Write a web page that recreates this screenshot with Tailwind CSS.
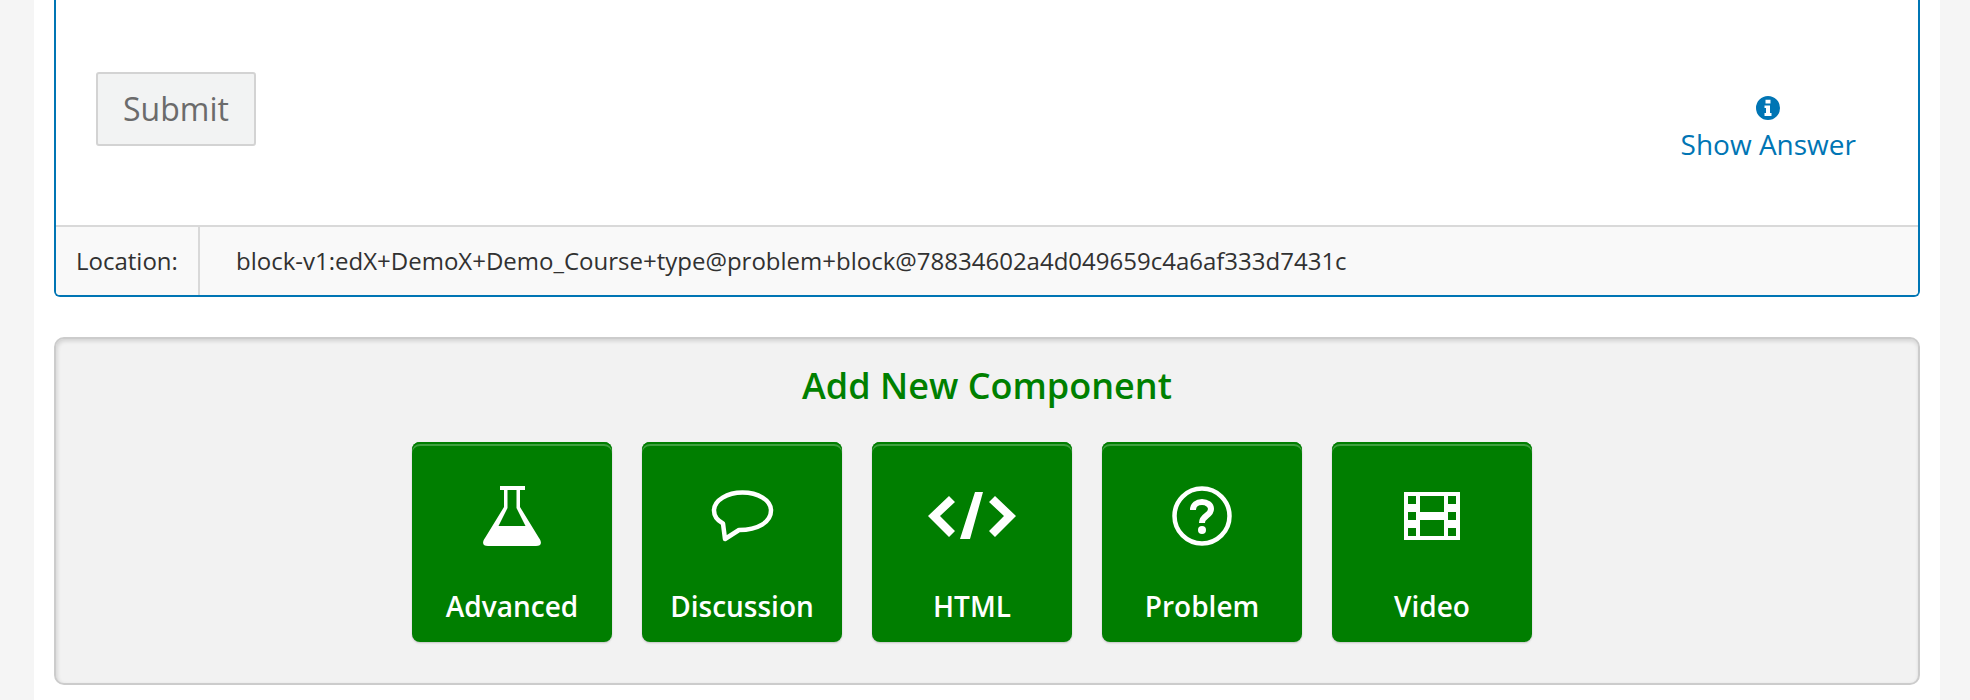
<!DOCTYPE html>
<html lang="en">
<head>
<meta charset="utf-8">
<script src="https://cdn.jsdelivr.net/npm/@tailwindcss/browser@4"></script>
<title>Unit</title>
</head>
<body class="bg-[#f5f5f5] overflow-hidden font-['Open_Sans',sans-serif]">
<main class="ml-[34px] mr-[30px] h-[700px] bg-white px-[20px]">
  <section class="h-[297px] rounded-b-[6px] border-2 border-t-0 border-[#0075b4] flex flex-col overflow-hidden">
    <div class="h-[225px] flex justify-between pl-[40px] pr-[62px]">
      <button class="mt-[72px] h-[74px] w-[160px] rounded-[3px] border-2 border-[#d3d3d3] bg-[#f2f3f3] text-[32px] leading-none text-[#6b6b6b]">Submit</button>
      <a class="mt-[96px] flex flex-col items-center text-[#0075b4] text-[28px] leading-[38px]">
        <svg class="w-[24px] h-[24px]" viewBox="0 0 24 24"><path fill="#0075b4" fill-rule="evenodd" d="M12 0a12 12 0 1 1 0 24a12 12 0 0 1 0-24ZM9.500 3.800v3.600h5V3.800ZM8.500 9.500v2.600h1.500v5H8.500v3h7v-3h-1.500V9.500Z"/></svg>
        <span class="mt-[5px]">Show Answer</span>
      </a>
    </div>
    <div class="flex-1 flex border-t-2 border-[#d9d9d9] bg-[#f9f9f9] text-[24px] text-[#313131]">
      <div class="w-[144px] border-r-2 border-[#d9d9d9] flex items-center pl-[20px]">Location:</div>
      <div class="flex items-center pl-[36px]">block-v1:edX+DemoX+Demo_Course+type@problem+block@78834602a4d049659c4a6af333d7431c</div>
    </div>
  </section>
  <section class="mt-[40px] h-[348px] rounded-[10px] border-2 border-[#cccccc] bg-[#f2f2f2] shadow-[inset_1px_2px_4px_rgba(0,0,0,0.14)] pt-[22px] text-center">
    <h2 class="h-[50px] text-[36px] leading-[50px] font-semibold text-[#008000]">Add New Component</h2>
    <div class="mt-[31px] flex justify-center">
      <button class="mr-[30px] h-[200px] w-[200px] rounded-[8px] bg-[#007e00] shadow-[inset_0_2px_0_#007e00,inset_0_4px_0_#3f9f3f,0_1px_2px_rgba(0,0,0,0.2)] flex flex-col items-center pt-[44px] text-white">
        <svg class="w-[88px] h-[60px]" viewBox="0 0 88 60"><path fill="#fff" fill-rule="evenodd" d="M32 0H57V4H52V21L71 52C74.500 57 73 60 68 60H20C15 60 13.500 57 17 52L36 21V4H32ZM39.500 4V22L30.500 40H57.500L48.500 22V4Z"/></svg>
        <span class="mt-[40px] text-[28px] leading-[40px] font-semibold">Advanced</span>
      </button>
      <button class="mr-[30px] h-[200px] w-[200px] rounded-[8px] bg-[#007e00] shadow-[inset_0_2px_0_#007e00,inset_0_4px_0_#3f9f3f,0_1px_2px_rgba(0,0,0,0.2)] flex flex-col items-center pt-[44px] text-white">
        <svg class="w-[88px] h-[60px]" viewBox="0 0 88 60"><path fill="none" stroke="#fff" stroke-width="4.500" stroke-linejoin="round" d="M44.500 6.500C29.500 6.500 16 14 16 24.500c0 5.500 3.500 10 9 13L27 53 41 44C60 44 73 36 73 24.500 73 14 60 6.500 44.500 6.500Z"/></svg>
        <span class="mt-[40px] text-[28px] leading-[40px] font-semibold">Discussion</span>
      </button>
      <button class="mr-[30px] h-[200px] w-[200px] rounded-[8px] bg-[#007e00] shadow-[inset_0_2px_0_#007e00,inset_0_4px_0_#3f9f3f,0_1px_2px_rgba(0,0,0,0.2)] flex flex-col items-center pt-[44px] text-white">
        <svg class="w-[88px] h-[60px]" viewBox="0 0 88 60"><path fill="#fff" d="M0 30 21 10l6 6-15 14 15 15-6 6ZM88 30 67 10l-6 6 15 14-15 15 6 6ZM47 6h8L42 53H32Z"/></svg>
        <span class="mt-[40px] text-[28px] leading-[40px] font-semibold">HTML</span>
      </button>
      <button class="mr-[30px] h-[200px] w-[200px] rounded-[8px] bg-[#007e00] shadow-[inset_0_2px_0_#007e00,inset_0_4px_0_#3f9f3f,0_1px_2px_rgba(0,0,0,0.2)] flex flex-col items-center pt-[44px] text-white">
        <svg class="w-[88px] h-[60px]" viewBox="0 0 88 60"><circle cx="44" cy="30" r="27.500" fill="none" stroke="#fff" stroke-width="4.500"/><path fill="none" stroke="#fff" stroke-width="6" d="M35 24c0-5 4-8 9-8s9 3 9 7c0 7-9 6-9 14"/><circle cx="44" cy="44" r="4" fill="#fff"/></svg>
        <span class="mt-[40px] text-[28px] leading-[40px] font-semibold">Problem</span>
      </button>
      <button class="mr-[30px] h-[200px] w-[200px] rounded-[8px] bg-[#007e00] shadow-[inset_0_2px_0_#007e00,inset_0_4px_0_#3f9f3f,0_1px_2px_rgba(0,0,0,0.2)] flex flex-col items-center pt-[44px] text-white">
        <svg class="w-[88px] h-[60px]" viewBox="0 0 88 60"><path fill="#fff" fill-rule="evenodd" d="M16 6h56v48H16ZM20 10v8h8v-8ZM32 10v16h24V10ZM60 10v8h8v-8ZM20 26v8h8v-8ZM60 26v8h8v-8ZM32 34v16h24V34ZM20 42v8h8v-8ZM60 42v8h8v-8Z"/></svg>
        <span class="mt-[40px] text-[28px] leading-[40px] font-semibold">Video</span>
      </button>
    </div>
  </section>
</main>
</body>
</html>
